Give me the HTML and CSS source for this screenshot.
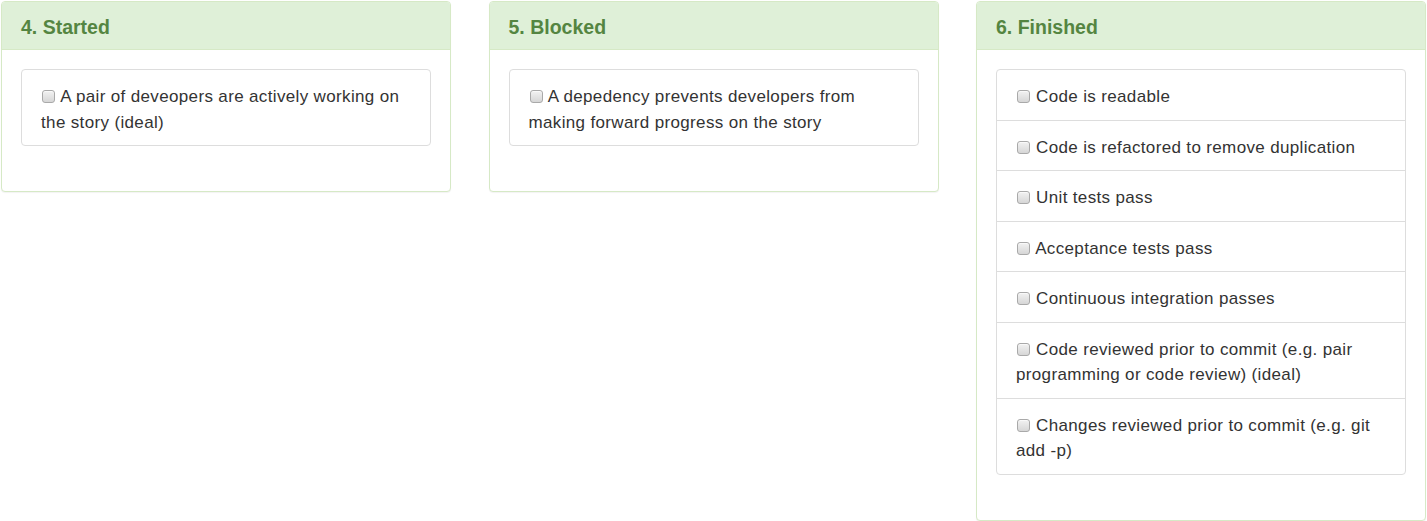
FILE: index.html
```html
<!DOCTYPE html>
<html>
<head>
<meta charset="utf-8">
<link rel="stylesheet" href="styles.css">
</head>
<body>
<div class="board">
  <section class="panel">
    <header class="panel-heading"><h3 class="panel-title">4. Started</h3></header>
    <div class="panel-body">
      <ul class="list-group">
        <li class="list-item"><label><input type="checkbox" class="check"> A pair of deveopers are actively working on the story (ideal)</label></li>
      </ul>
    </div>
  </section>
  <section class="panel">
    <header class="panel-heading"><h3 class="panel-title">5. Blocked</h3></header>
    <div class="panel-body">
      <ul class="list-group">
        <li class="list-item"><label><input type="checkbox" class="check"> A depedency prevents developers from making forward progress on the story</label></li>
      </ul>
    </div>
  </section>
  <section class="panel">
    <header class="panel-heading"><h3 class="panel-title">6. Finished</h3></header>
    <div class="panel-body">
      <ul class="list-group">
        <li class="list-item"><label><input type="checkbox" class="check"> Code is readable</label></li>
        <li class="list-item"><label><input type="checkbox" class="check"> Code is refactored to remove duplication</label></li>
        <li class="list-item"><label><input type="checkbox" class="check"> Unit tests pass</label></li>
        <li class="list-item"><label><input type="checkbox" class="check"> Acceptance tests pass</label></li>
        <li class="list-item"><label><input type="checkbox" class="check"> Continuous integration passes</label></li>
        <li class="list-item"><label><input type="checkbox" class="check"> Code reviewed prior to commit (e.g. pair programming or code review) (ideal)</label></li>
        <li class="list-item"><label><input type="checkbox" class="check"> Changes reviewed prior to commit (e.g. git add -p)</label></li>
      </ul>
    </div>
  </section>
</div>
</body>
</html>
```

FILE: styles.css
```css
* { box-sizing: border-box; }
html, body { margin: 0; padding: 0; background: #fff; }
body {
  font-family: "Liberation Sans", Arial, sans-serif;
  font-size: 17px;
  color: #333;
}
.board {
  display: grid;
  grid-template-columns: repeat(3, 450px);
  column-gap: 37.5px;
  align-items: start;
  padding: 1px 0 0 1px;
}
.panel {
  background: #fff;
  border: 1px solid #d6e9c6;
  border-radius: 4px;
  box-shadow: 0 1px 1px rgba(0,0,0,.05);
}
.panel-heading {
  background: #dff0d8;
  color: #3c763d;
  border-bottom: 1px solid #d6e9c6;
  border-radius: 3px 3px 0 0;
  padding: 12px 19px 8px;
}
.panel-title {
  margin: 0;
  font-size: 19.5px;
  line-height: 27px;
  font-weight: bold;
  color: #548541;
}
.panel-body {
  padding: 19px 19px 19px;
}
.list-group {
  list-style: none;
  margin: 0 0 26px;
  padding: 0;
  border: 1px solid #ddd;
  border-radius: 4px;
}
.list-item {
  padding: 14px 19px 10px;
  line-height: 25.5px;
  letter-spacing: 0.35px;
  border-top: 1px solid #ddd;
}
.list-item:first-child { border-top: 0; }
.list-item label { cursor: default; }
.check {
  -webkit-appearance: none;
  appearance: none;
  display: inline-block;
  width: 13px;
  height: 13px;
  margin: 0 1px 0 1px;
  vertical-align: -1px;
  border: 1px solid #a9a9a9;
  border-radius: 3px;
  background: linear-gradient(#f2f2f2, #d6d6d6);
  box-shadow: inset 0 1px 0 rgba(255,255,255,.6);
}
```
